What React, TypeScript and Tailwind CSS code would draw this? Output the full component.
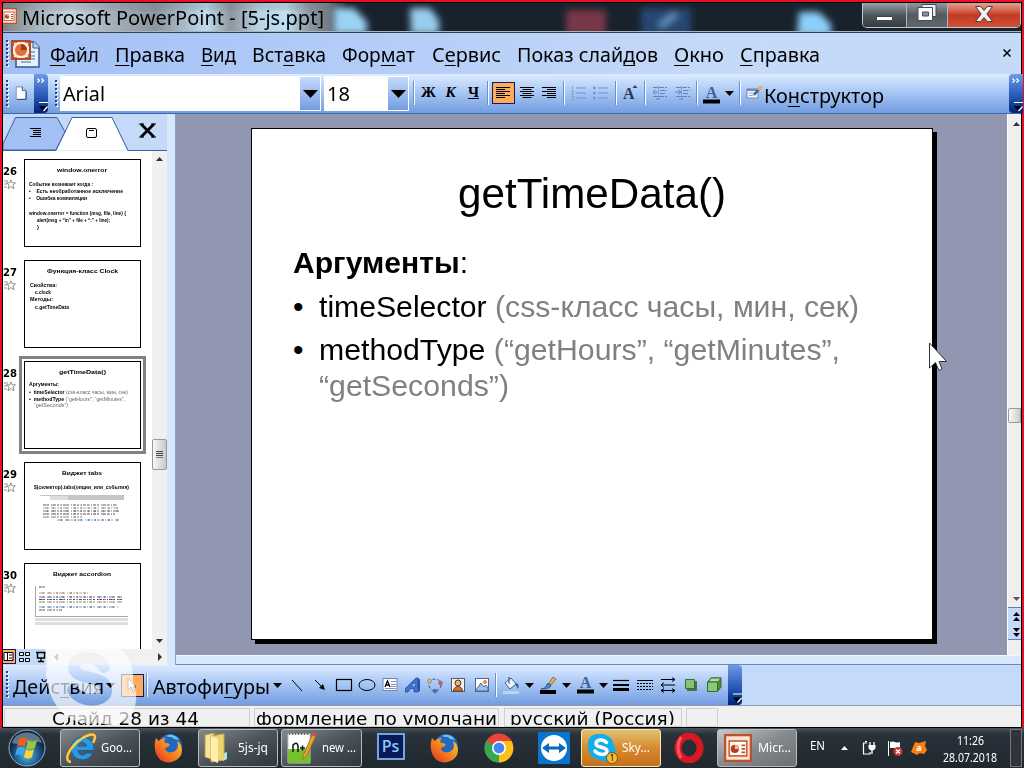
import React, { useLayoutEffect, useRef, useState } from 'react';

type Kids = { children?: React.ReactNode; className?: string };

/** Single line of text, stretched horizontally to the width of its box. */
function Fit({ className = '', children }: Kids) {
  const outer = useRef<HTMLSpanElement>(null);
  const inner = useRef<HTMLSpanElement>(null);
  const [scale, setScale] = useState(1);
  useLayoutEffect(() => {
    if (outer.current && inner.current && inner.current.offsetWidth) {
      setScale(outer.current.clientWidth / inner.current.getBoundingClientRect().width);
    }
  }, []);
  return (
    <span ref={outer} className={`block shrink-0 whitespace-nowrap ${className}`}>
      <span ref={inner} className="inline-block origin-left" style={{ transform: `scaleX(${scale})` }}>
        {children}
      </span>
    </span>
  );
}

const U = ({ children }: Kids) => (
  <span className="underline decoration-1 underline-offset-[3px]">{children}</span>
);

const Cell = ({ className = '', children }: Kids) => (
  <div className={`flex h-full shrink-0 items-center justify-center ${className}`}>{children}</div>
);

const Sep = ({ className = '' }: Kids) => (
  <Cell className={className}>
    <div className="h-6 w-px bg-[#6a8fd0]" />
    <div className="h-6 w-px bg-white" />
  </Cell>
);

const Down = ({ className = '' }: Kids) => (
  <svg className={`shrink-0 ${className}`} width="9" height="5" viewBox="0 0 9 5">
    <path d="M0 0H9L4.5 5Z" fill="#000" />
  </svg>
);

const Dots = ({ className = '' }: Kids) => (
  <svg className={`shrink-0 ${className}`} width="4" height="32" viewBox="0 0 4 32">
    {[2, 6, 10, 14, 18, 22, 26].map((y) => (
      <g key={y}>
        <rect x="1" y={y + 1} width="2" height="2" fill="#fff" />
        <rect x="0" y={y} width="2" height="2" fill="#27417c" />
      </g>
    ))}
  </svg>
);

function Overflow({ className = '', chevrons = true }: { className?: string; chevrons?: boolean }) {
  return (
    <svg className={`shrink-0 bg-linear-to-b from-[#6f9ae6] via-[#2f5fbd] to-[#00247c] ${className}`} width="14" height="39" viewBox="0 0 14 39">
      {chevrons && <path d="M3.500 4.500l2 2-2 2M7.500 4.500l2 2-2 2" stroke="#fff" strokeWidth="1.300" fill="none" />}
      <path d="M5 28.500h9" stroke="#fff" strokeWidth="1.200" />
      <path d="M5 32h8l-4 5Z" fill="#000" />
      <path d="M9.500 37l4-4.500" stroke="#fff" strokeWidth="1.200" />
    </svg>
  );
}

const PptIcon = ({ size }: { size: number }) => (
  <svg className="shrink-0" width={size} height={size} viewBox="0 0 16 16">
    <rect x=".6" y=".6" width="14.800" height="14.800" fill="#f8e4d8" stroke="#c0502c" strokeWidth="1.400" />
    <rect x="3" y="4" width="10" height="8.500" fill="#fff" stroke="#cb6640" strokeWidth="1" />
    <circle cx="6.200" cy="8.500" r="2.300" fill="#b23f1e" />
    <path d="M6.200 8.500V6.200A2.300 2.300 0 0 1 8.500 8.500Z" fill="#f6b48e" />
    <path d="M10 6.500h2M10 8.500h2M10 10.500h2" stroke="#c0502c" />
  </svg>
);

function TitleBar() {
  return (
    <div className="relative flex h-[30px] shrink-0 overflow-hidden border-b border-[#353f4b] bg-[#17222d]">
      <svg className="absolute inset-0" width="1018" height="29" viewBox="3 3 1018 29">
        <defs>
          <filter id="soft" x="-50%" y="-50%" width="200%" height="200%"><feGaussianBlur stdDeviation="3.500" /></filter>
          <linearGradient id="glass" x1="0" x2="1">
            <stop offset="0" stopColor="#7d8183" /><stop offset=".1" stopColor="#a9b6be" />
            <stop offset=".2" stopColor="#c3d2de" /><stop offset=".32" stopColor="#a3afb9" />
            <stop offset=".44" stopColor="#8b959d" /><stop offset=".52" stopColor="#a5b9c6" />
            <stop offset=".59" stopColor="#bfdcf0" /><stop offset=".66" stopColor="#8d979e" />
            <stop offset=".74" stopColor="#b9d3e2" /><stop offset=".82" stopColor="#bfe0f4" />
            <stop offset=".89" stopColor="#8a979f" /><stop offset=".94" stopColor="#737d84" /><stop offset="1" stopColor="#17222d" />
          </linearGradient>
        </defs>
        <rect x="3" y="3" width="345" height="29" fill="url(#glass)" />
        <rect x="3" y="3" width="320" height="5" fill="#5d666c" opacity=".4" filter="url(#soft)" />
        <g filter="url(#soft)">
          <path d="M334 8h20l13 14v12h-33z" fill="#9bd3f5" />
          <path d="M410 8h20l9 12v14h-28z" fill="#98cdee" />
          <rect x="566" y="10" width="40" height="25" fill="#793947" />
          <rect x="641" y="8" width="50" height="28" fill="#28466f" />
          <path d="M660 26l16-12" stroke="#6d9dcc" strokeWidth="5" />
          <path d="M799 12h20l12 12v12h-34z" fill="#8bd0fa" />
        </g>
        <path d="M3 31.500h1018" stroke="#a7b4c2" />
      </svg>
      <div className="relative mt-[5px] -ml-0.5 h-[18px] shrink-0"><PptIcon size={16} /></div>
      <Fit className="relative ml-[5px] w-[302px] font-['Noto_Sans',sans-serif] text-[19px] leading-[31px] text-black">Microsoft PowerPoint - [5-js.ppt]</Fit>
      <div className="relative ml-auto flex h-[25px] w-[159px] overflow-hidden rounded-b-[5px] border border-t-0 border-[#c2c8cd]">
        <div className="flex w-11 items-center justify-center border-r border-[#aeb5bb] bg-linear-to-b from-[#9aa2a8] via-[#4f575e] to-[#343c43]">
          <div className="mt-1.5 h-[5px] w-[17px] rounded-[1px] border border-[#444] bg-white" />
        </div>
        <div className="flex w-[41px] items-center justify-center border-r border-[#aeb5bb] bg-linear-to-b from-[#929a9f] via-[#535b60] to-[#5e686d]">
          <svg className="mb-1" width="20" height="20" viewBox="0 0 20 20">
            <path d="M5 1.500h14v12H5z" fill="#eee" stroke="#474c54" />
            <path d="M1 4.500h14.500v13H1z" fill="#fff" stroke="#474c54" />
            <path d="M5.500 9h6v4h-6z" fill="#8791a1" stroke="#474c54" />
          </svg>
        </div>
        <div className="flex flex-1 items-center justify-center bg-linear-to-b from-[#e3a092] via-[#c33a20] to-[#cf5236]">
          <svg className="mb-0.5" width="20" height="18" viewBox="0 0 20 18">
            <path d="M1.500 1.500h5L10 5.500l3.500-4h5L12.800 9l5.700 7.500h-5L10 12.500l-3.500 4h-5L7.200 9z" fill="#f5f5f5" stroke="#57363a" />
          </svg>
        </div>
      </div>
    </div>
  );
}

function MenuBar() {
  return (
    <div className="flex h-[41px] shrink-0 items-center bg-linear-to-r from-[#a2c0f6] to-[#c5d9f8] to-70% pt-1 font-['Noto_Sans',sans-serif] text-[19px] leading-[37px]">
      <Dots className="mb-1 ml-[3px]" />
      <svg className="mb-1 -ml-px shrink-0" width="32" height="30" viewBox="0 0 32 30">
        <path d="M7 3h18l5 5v20H7z" fill="#e8f0fd" stroke="#34588e" strokeWidth="1.500" />
        <path d="M24 2v7h7" fill="#bed2ee" stroke="#34588e" />
        <path d="M14 13h12M12 17h14M12 20h14M12 23h10" stroke="#7096d0" strokeWidth="1.300" />
        <path d="M3 2h18v18H3z" fill="#fbe7d8" stroke="#b14c27" strokeWidth="2" />
        <path d="M4 7V3h4M16 3h4v4M4 15v4h4M20 15v4h-4" fill="none" stroke="#b14c27" strokeWidth="1.500" />
        <circle cx="12" cy="11" r="6" fill="#e0703b" />
        <path d="M12 11V5a6 6 0 0 1 6 6Z" fill="#a63a16" />
      </svg>
      <Fit className="ml-[9px] w-[49px]"><U>Ф</U>айл</Fit>
      <Fit className="ml-4 w-[70px]"><U>П</U>равка</Fit>
      <Fit className="ml-4 w-[35px]"><U>В</U>ид</Fit>
      <Fit className="ml-4 w-[74px]">Вст<U>а</U>вка</Fit>
      <Fit className="ml-4 w-[73px]">Фор<U>м</U>ат</Fit>
      <Fit className="ml-[17px] w-[69px]">С<U>е</U>рвис</Fit>
      <Fit className="ml-4 w-[141px]">Показ слай<U>д</U>ов</Fit>
      <Fit className="ml-4 w-[50px]"><U>О</U>кно</Fit>
      <Fit className="ml-4 w-[80px]"><U>С</U>правка</Fit>
      <svg className="mr-2.5 mb-1.5 ml-auto" width="8" height="8" viewBox="0 0 8 8"><path d="M.5 .5l7 7M7.500 .5l-7 7" stroke="#000" strokeWidth="1.500" /></svg>
    </div>
  );
}

const Combo = ({ className = '', children }: Kids) => (
  <div className={`flex h-[35px] shrink-0 border border-white bg-white font-['Noto_Sans',sans-serif] text-[19px] leading-[34px] ${className}`}>
    {children}
    <div className="ml-auto flex w-5 items-center justify-center bg-linear-to-b from-[#c6dafa] to-[#739de0]">
      <svg width="15" height="8" viewBox="0 0 15 8"><path d="M0 0h15L7.500 8z" /></svg>
    </div>
  </div>
);

const AlignIcon = ({ x }: { x: number[] }) => (
  <svg width="14" height="12" viewBox="0 0 14 12">
    {[0, 2, 4, 6, 8, 10].map((y, i) => (
      <rect key={y} x={i % 2 ? x[0] : 0} y={y} width={i % 2 ? x[1] : 14} height="1" fill="#000" />
    ))}
  </svg>
);

const ListIcon = ({ numbered }: { numbered?: boolean }) => (
  <svg width="16" height="14" viewBox="0 0 16 14" stroke="#7895c7" strokeWidth="1.100">
    <path d="M5 2h10M5 7h10M5 12h10" />
    {numbered ? <path d="M1.500 0v4M.5 5.500h2v1.500l-2 1.500h2M.5 10.500h2v3h-2" fill="none" strokeWidth=".8" /> : <path d="M0 2h2.500M0 7h2.500M0 12h2.500" strokeWidth="2.400" />}
  </svg>
);

const IndentIcon = ({ flip }: { flip?: boolean }) => (
  <svg width="16" height="14" viewBox="0 0 16 14" stroke="#6483bd" fill="none">
    <path d="M1 1.500h14M8 4.500h7M8 7.500h5M1 10.500h14M4 13h4" strokeDasharray="5 1" />
    <path d={flip ? 'M0 6h5M3 3.500L6 6l-3 2.500' : 'M6 6H1M3.500 3.500L1 6l2.500 2.500'} />
    <path d="M6.500 0v14" strokeDasharray="1 1" />
  </svg>
);

const LetterA = () => (
  <svg className="overflow-visible" width="17" height="18" viewBox="0 0 17 18">
    <text x="8.500" y="12" textAnchor="middle" fontFamily="Liberation Serif" fontSize="16" fontWeight="bold" fill="#3d639f">A</text>
    <rect x="0" y="13.500" width="17" height="4" fill="#000" />
  </svg>
);

function FormatBar() {
  return (
    <div className="flex h-10 shrink-0 items-start border-b border-[#3c68ac] bg-linear-to-b from-[#deebff] via-[#a9c8f5] via-45% to-[#739ce0]">
      <Dots className="mt-1 ml-[3px]" />
      <svg className="mt-[12px] ml-[5px] shrink-0" width="12" height="14" viewBox="0 0 13 16">
        <path d="M1 1h7l4 4v10H1z" fill="#fff" stroke="#6c87b6" /><path d="M8 1v4h4" fill="#cad9f0" stroke="#29406d" /><path d="M2 15.500h10.500V6" fill="none" stroke="#29406d" />
      </svg>
      <Overflow className="ml-[7px] rounded-r" />
      <Dots className="mt-1 ml-[7px]" />
      <Combo className="mt-0.5 ml-px w-[261px]"><Fit className="ml-0.5 w-[42px]">Arial</Fit></Combo>
      <Combo className="mt-0.5 ml-[3px] w-[85px]"><Fit className="ml-0.5 w-[23px]">18</Fit></Combo>
      <div className="ml-px flex h-[37px] font-['Liberation_Serif',serif] text-[15px] font-bold">
        <Sep className="w-2" />
        <Cell className="w-[21px]">Ж</Cell>
        <Cell className="w-[23px] italic">К</Cell>
        <Cell className="w-[23px] underline">Ч</Cell>
        <Sep className="w-1.5" />
        <Cell className="w-6"><div className="flex h-[22px] w-[23px] items-center justify-center border border-[#0d1a6b] bg-[#ffab57]"><AlignIcon x={[0, 9]} /></div></Cell>
        <Cell className="w-[23px]"><AlignIcon x={[2.5, 9]} /></Cell>
        <Cell className="w-[22px]"><AlignIcon x={[5, 9]} /></Cell>
        <Sep className="w-[7px]" />
        <Cell className="w-[23px]"><ListIcon numbered /></Cell>
        <Cell className="w-[22px]"><ListIcon /></Cell>
        <Sep className="w-[7px]" />
        <Cell className="w-[23px]">
          <svg className="overflow-visible" width="16" height="16" viewBox="0 0 16 16"><text x="0" y="14" fontFamily="Liberation Serif" fontSize="16" fontWeight="bold" fill="#29364f">A</text><path d="M9.500 3h5L12 0z" fill="#26458d" /></svg>
        </Cell>
        <Sep className="w-1.5" />
        <Cell className="w-[23px]"><IndentIcon /></Cell>
        <Cell className="w-[23px]"><IndentIcon flip /></Cell>
        <Sep className="w-1.5" />
        <Cell className="w-[22px] pt-1"><LetterA /></Cell>
        <Cell className="w-3.5 pt-0.5"><Down /></Cell>
        <Sep className="w-[7px]" />
        <Cell className="w-[22px]">
          <svg width="17" height="14" viewBox="0 0 17 14">
            <rect x="1" y="3" width="11" height="9" fill="#f6f9ff" stroke="#7085ad" /><path d="M1 3h11v2H1z" fill="#6a8bc9" /><path d="M3 7h6M3 9.500h4" stroke="#8ba5d5" />
            <path d="M8 9l6-7" stroke="#3f5c99" strokeWidth="2.500" /><path d="M12 4l3.500-4" stroke="#e8b24a" strokeWidth="3" />
          </svg>
        </Cell>
      </div>
      <Fit className="-ml-px w-[120px] font-['Noto_Sans',sans-serif] text-[19px] leading-[44px]">Ко<U>н</U>структор</Fit>
      <Overflow className="-mr-0.5 ml-auto rounded-l" />
    </div>
  );
}

function Thumb({ n, selected, cut, children }: { n: number; selected?: boolean; cut?: boolean; children: React.ReactNode }) {
  return (
    <div className={`flex shrink-0 ${cut ? 'h-[87px]' : 'h-[101px]'}`}>
      <div className="w-[21px] shrink-0 pt-1.5">
        <Fit className="w-3.5 font-['DejaVu_Sans',sans-serif] text-[11px] leading-[13px] font-bold">{n}</Fit>
        <svg className="mt-px ml-px" width="12" height="11" viewBox="0 0 12 11" stroke="#777" strokeWidth=".8" fill="none">
          <path d="M7 .8l1.200 3h3.300L9 6l1 3.800-3-2.200-3 2.200L5 6 2.500 3.800h3.300zM0 2h4M0 5h3M0 8h3" />
        </svg>
      </div>
      <div className={`h-[88px] w-[117px] shrink-0 border border-black bg-white font-['Liberation_Sans',sans-serif] text-[6px] leading-[7px] font-bold ${selected ? 'outline-3 outline-offset-2 outline-[#828282]' : ''}`}>{children}</div>
    </div>
  );
}

const codeColors = ['#354a9c', '#c79158', '#59708c', '#313b73', '#a5743e', '#6897a8'];
function CodeLines({ rows, className = '' }: { rows: [number, number, number][]; className?: string }) {
  return (
    <svg className={`block ${className}`} width="90" height="26" viewBox="0 0 90 26">
      {rows.map(([x, y, w], i) => (
        <g key={y} strokeWidth="1.200" opacity=".9">
          <path d={`M${x} ${y}h${w}`} stroke={codeColors[i % 6]} strokeDasharray="3 1 2 2 1 1" />
          <path d={`M${x + 3} ${y}h${w - 3}`} stroke={codeColors[(i + 1) % 6]} strokeDasharray="2 4 2 6" />
        </g>
      ))}
    </svg>
  );
}

function SidePane() {
  return (
    <div className="flex w-[164px] shrink-0 flex-col bg-white">
      <svg className="shrink-0 bg-[#c5d9f8]" width="164" height="37" viewBox="0 0 164 37">
        <path d="M0 36V30L12.500 3.500H54L62 18 53 36Z" fill="#a3c0f5" stroke="#3b5f9f" />
        <path d="M53 37L69 3.500h40l15 33h-71Z" fill="#fff" />
        <path d="M0 36.500h53L69 3.500h40l16 33h39" fill="none" stroke="#3b5f9f" />
        <path d="M27 14.500h11M30 16.500h8M30 18.500h8M30 20.500h8M27 22.500h11" stroke="#000" />
        <rect x="83.500" y="14.500" width="10" height="9" rx="1.500" fill="#fff" stroke="#000" /><path d="M86 16.500h5" stroke="#000" />
        <path d="M138 10l13 13M151 10l-13 13" stroke="#000" strokeWidth="2.800" /><path d="M136 10h5M148 10h5M136 23h5M148 23h5" stroke="#000" />
      </svg>
      <div className="flex h-[498px] shrink-0">
        <div className="flex w-[149px] flex-col overflow-hidden pt-2">
          <Thumb n={26}>
            <Fit className="mt-[7px] ml-8 w-[50px]">window.onerror</Fit>
            <Fit className="mt-[7px] ml-1 w-[64px]">Событие возникает когда :</Fit>
            <Fit className="ml-1 w-[94px]">•&nbsp;&nbsp;&nbsp;&nbsp;Есть необработанное исключение</Fit>
            <Fit className="ml-1 w-[58px]">•&nbsp;&nbsp;&nbsp;&nbsp;Ошибка компиляции</Fit>
            <Fit className="mt-2 ml-1 w-[97px]">window.onerror = function (msg, file, line) {'{'}</Fit>
            <Fit className="ml-3 w-[73px]">alert(msg + “\n” + file + “:” + line);</Fit>
            <Fit className="ml-3 w-0.5">{'}'}</Fit>
          </Thumb>
          <Thumb n={27}>
            <Fit className="mt-[7px] ml-[22px] w-[71px]">Функция-класс Clock</Fit>
            <Fit className="mt-[7px] ml-[5px] w-[27px]">Свойства:</Fit>
            <Fit className="ml-2.5 w-4">c.clock</Fit>
            <Fit className="ml-[5px] w-[23px]">Методы:</Fit>
            <Fit className="mt-px ml-2.5 w-[34px]">c.getTimeData</Fit>
          </Thumb>
          <Thumb n={28} selected>
            <Fit className="mt-[7px] ml-[34px] w-[47px]">getTimeData()</Fit>
            <Fit className="mt-[5px] ml-1 w-[30px]">Аргументы:</Fit>
            <Fit className="mt-px ml-1 w-[99px]">•&nbsp; timeSelector <span className="font-normal text-[#666]">(css-класс часы, мин, сек)</span></Fit>
            <Fit className="ml-1 w-[96px]">•&nbsp; methodType <span className="font-normal text-[#666]">(“getHours”, “getMinutes”,</span></Fit>
            <Fit className="-mt-px ml-[9px] w-[34px] font-normal text-[#666]">“getSeconds”)</Fit>
          </Thumb>
          <Thumb n={29}>
            <Fit className="mt-[7px] ml-[37px] w-10">Виджет tabs</Fit>
            <Fit className="mt-[7px] ml-[9px] w-[95px]">$(селектор).tabs(опции_или_события)</Fit>
            <div className="mt-1 ml-[15px] flex h-[5px] w-[84px] border-t border-[#c6c6c6] bg-[#c6c6c6]"><div className="w-2.5 bg-white" /><div className="w-[18px] bg-[#ddd]" /></div>
            <CodeLines className="ml-2.5" rows={[[8, 5, 74], [8, 8, 75], [8, 11, 76], [8, 14, 72], [8, 17, 40], [22, 20, 62]]} />
          </Thumb>
          <Thumb n={30} cut>
            <Fit className="mt-[7px] ml-7 w-[58px]">Виджет accordion</Fit>
            <div className="mt-2 ml-2.5 h-[31px] w-[93px] border-b border-l border-[#aaa]">
              <CodeLines rows={[[3, 1, 7], [3, 7, 50], [3, 11, 83], [3, 13.5, 84], [3, 16, 84], [3, 21, 79], [3, 24, 23]]} />
            </div>
            <div className="mt-px ml-2.5 h-[3px] w-[93px] bg-[#dedede]" /><div className="mt-px ml-2.5 h-[3px] w-[93px] bg-[#dedede]" />
          </Thumb>
        </div>
        <div className="flex w-[15px] flex-col items-center justify-between bg-[#f0f0f0] py-1.5">
          <svg width="7" height="4" viewBox="0 0 7 4"><path d="M0 4h7L3.500 0z" fill="#333" /></svg>
          <div className="mt-[109px] flex h-[31px] w-[15px] flex-col items-center justify-center gap-px rounded-[2px] border border-[#999] bg-linear-to-r from-[#f8f8f8] to-[#c9c9c9]">
            <div className="h-px w-[7px] bg-[#444]" /><div className="h-px w-[7px] bg-[#444]" /><div className="h-px w-[7px] bg-[#444]" /><div className="h-px w-[7px] bg-[#777]" />
          </div>
          <svg width="7" height="4" viewBox="0 0 7 4"><path d="M0 0h7L3.500 4z" fill="#333" /></svg>
        </div>
      </div>
      <svg className="shrink-0" width="164" height="16" viewBox="0 0 164 16">
        <rect width="164" height="16" fill="#c5d9f8" /><rect x="43" width="121" height="16" fill="#f1f1f1" />
        <rect x="-.5" y=".5" width="13" height="14" fill="#ffb05b" stroke="#0d1a6b" />
        <path d="M1 3.500h9v8H1zM4.500 3v9M6 6h3M6 9h3" fill="#fff" stroke="#000" />
        <path d="M16.500 3.500h4v3h-4zM22.500 3.500h4v3h-4zM16.500 9.500h4v3h-4zM22.500 9.500h4v3h-4z" fill="#e7f0ff" stroke="#000" />
        <path d="M33 3.500h10M34.500 4v5h7V4M38 9v3M35 12.500h6" fill="none" stroke="#000" strokeWidth="1.400" />
        <path d="M55 4v8l-4-4z" fill="#777" /><path d="M155 4v8l4-4z" fill="#333" />
      </svg>
    </div>
  );
}

function SlideView() {
  return (
    <div className="flex min-w-0 flex-1 flex-col">
      <div className="flex h-[541px] shrink-0 bg-[#9297b1]">
        <div className="mt-3.5 ml-[75px] h-[512px] w-[682px] shrink-0 border border-black bg-white font-['Liberation_Sans',Arial,sans-serif] text-black shadow-[4px_4px_0_0_#000]">
          <Fit className="mt-[41px] ml-[206px] w-[268px] text-[42px] leading-[48px]">getTimeData()</Fit>
          <div className="flex text-[30px] leading-9">
            <Fit className="mt-[27px] ml-[41px] w-[175px]"><b>Аргументы</b>:</Fit>
          </div>
          <div className="mt-2 flex text-[30px] leading-9">
            <span className="ml-[41px] w-[26px]">•</span>
            <Fit className="w-[540px]">timeSelector <span className="text-[#808080]">(css-класс часы, мин, сек)</span></Fit>
          </div>
          <div className="mt-[7px] flex text-[30px] leading-9">
            <span className="ml-[41px] w-[26px]">•</span>
            <div>
              <Fit className="w-[521px]">methodType <span className="text-[#808080]">(“getHours”, “getMinutes”,</span></Fit>
              <Fit className="w-[190px] text-[#808080]">“getSeconds”)</Fit>
            </div>
          </div>
        </div>
        <div className="ml-auto flex w-[14px] shrink-0 flex-col items-center border-l border-white bg-[#efefef]">
          <svg className="mt-2 ml-1" width="7" height="4" viewBox="0 0 7 4"><path d="M0 4h7L3.500 0z" fill="#333" /></svg>
          <div className="mt-[282px] h-[15px] w-[13px] rounded-l-[2px] border border-[#999] bg-linear-to-r from-[#fafafa] to-[#ccc]" />
          <svg className="mt-[174px] ml-1" width="7" height="4" viewBox="0 0 7 4"><path d="M0 0h7L3.500 4z" fill="#555" /></svg>
          <svg className="mt-1.5" width="13" height="33" viewBox="0 0 13 33">
            <rect width="13" height="33" fill="#c5d9f8" /><path d="M0 .5h13M0 32.500h13" stroke="#5c7fc0" />
            <path d="M5 9l3.500-4L12 9zM5 14l3.500-4 3.500 4zM5 21h7l-3.500 4zM5 26h7l-3.500 4z" />
          </svg>
        </div>
      </div>
      <div className="h-2.5 shrink-0 border-t border-b border-t-[#f4f7fd] border-b-[#6489c8] bg-[#d9e7fb]" />
    </div>
  );
}

const Ic = ({ children, w = 20 }: { children: React.ReactNode; w?: number }) => (
  <svg width={w} height="20" viewBox="0 0 20 20" fill="none" stroke="#000">{children}</svg>
);

function DrawBar() {
  return (
    <div className="flex h-[41px] shrink-0 border-b border-[#8e9bb2] bg-[#c5d9f8] font-['Noto_Sans',sans-serif] text-[19px] leading-[44px]">
      <div className="flex h-10 w-[739px] shrink-0 rounded-r bg-linear-to-b from-[#deebff] via-[#a9c8f5] via-45% to-[#739ce0]">
        <Dots className="mt-1 ml-[3px]" />
        <Fit className="ml-[3px] w-[91px]">Дейс<U>т</U>вия</Fit>
        <Cell className="w-[13px]"><Down /></Cell>
        <Cell className="ml-0.5 w-[26px]">
          <div className="flex size-[23px] items-center justify-center border border-[#0d1a6b] bg-[#ffab57]">
            <svg width="10" height="16" viewBox="0 0 10 16"><path d="M1 1v12l3-3 2 5 2-1-2-4h3z" fill="#fff" stroke="#555" /></svg>
          </div>
        </Cell>
        <Sep className="w-[3px]" />
        <Fit className="ml-[5px] w-[117px]">Автофи<U>г</U>уры</Fit>
        <Cell className="w-[15px]"><Down /></Cell>
        <Cell className="w-[23px]"><Ic><path d="M5 5l10 11" /></Ic></Cell>
        <Cell className="w-6"><Ic><path d="M5 5l8 8" /><path d="M15 15l-6-2 4-4z" fill="#000" stroke="none" /></Ic></Cell>
        <Cell className="w-[23px]"><Ic><rect x="2.500" y="4.500" width="15" height="11" strokeWidth="1.200" /></Ic></Cell>
        <Cell className="w-[23px]"><Ic><ellipse cx="10" cy="10" rx="8" ry="5.500" /></Ic></Cell>
        <Cell className="w-[23px]"><Ic><rect x="3" y="3.500" width="14" height="12" fill="#fff" stroke="#7187ae" /><path d="M5 12l2.500-6L10 12M6 10h3" strokeWidth="1.300" /><path d="M11 6.500h5M11 9.500h5M11 11.500h5M5 13.500h11" stroke="#8292b5" /></Ic></Cell>
        <Cell className="w-[23px]"><Ic><path d="M2.500 13.500L13 3h2v14h-4v-3.500H7.500L5 17H2.500z" fill="#3d75d5" stroke="#214b9c" strokeWidth=".8" /><path d="M8.500 11.500L12 7v4.500z" fill="#c4d9fa" stroke="#214b9c" strokeWidth=".6" /><path d="M15 3l2 1.500v11.500l-2 1z" fill="#2754ac" stroke="none" /></Ic></Cell>
        <Cell className="w-[22px]"><Ic><circle cx="10" cy="10" r="6" stroke="#294e91" strokeDasharray="3 2" /><circle cx="4.500" cy="6" r="2" fill="#e4c23f" stroke="#666" strokeWidth=".5" /><circle cx="15.500" cy="8" r="2" fill="#e25f34" stroke="#666" strokeWidth=".5" /><circle cx="10" cy="16" r="2" fill="#546ac7" stroke="#666" strokeWidth=".5" /></Ic></Cell>
        <Cell className="w-6"><Ic><rect x="3.500" y="3.500" width="13" height="13" fill="#f8f3e8" stroke="#52596d" /><circle cx="10" cy="8" r="3" fill="#e6b27c" stroke="#513820" /><path d="M5.500 16c0-6 9-6 9 0z" fill="#d17331" stroke="#66421f" /></Ic></Cell>
        <Cell className="w-[23px]"><Ic><rect x="3.500" y="3.500" width="13" height="13" fill="#fff" stroke="#52658d" /><path d="M4 15l5-7 3 4 2-2 2 3v3H4z" fill="#9ec1e5" stroke="#4a689b" /><circle cx="13" cy="7" r="2" fill="#e78a3d" stroke="none" /></Ic></Cell>
        <Sep className="w-1.5" />
        <Cell className="w-[23px]"><Ic><path d="M4 8l6-5 5 6-6 5z" fill="#eff5ff" stroke="#3f5f94" /><path d="M8 2v7" stroke="#345" /><path d="M15 8c3 1 3 3 2 6l-3-5z" fill="#3360ad" stroke="none" /><path d="M2 16h16v3H2z" fill="#b4d8eb" stroke="none" /></Ic></Cell>
        <Cell className="w-3.5"><Down /></Cell>
        <Cell className="w-6"><Ic><path d="M3 14c4 0 5-3 7-6l3 3c-3 3-6 3-10 3z" fill="#5087d4" stroke="#34558e" /><path d="M11 8l4-6 3 2-5 6z" fill="#edae45" stroke="#725228" strokeWidth=".7" /><path d="M2 15h16v4H2z" fill="#000" stroke="none" /></Ic></Cell>
        <Cell className="w-[13px]"><Down /></Cell>
        <Cell className="w-6"><LetterA /></Cell>
        <Cell className="w-3"><Down /></Cell>
        <Cell className="w-6"><Ic><path d="M2 5.500h16" strokeWidth="1.200" /><path d="M2 10h16" strokeWidth="2" /><path d="M2 14.500h16" strokeWidth="3" /></Ic></Cell>
        <Cell className="w-[23px]"><Ic><path d="M2 5.500h16" /><path d="M2 8.500h16M2 11.500h16M2 14.500h16" strokeDasharray="2 1" /></Ic></Cell>
        <Cell className="w-[23px]"><Ic><path d="M3 4.500h14l-3-2M17 4.500l-3 2M17 10H3l3-2.500M3 10l3 2.500M3 15.500h14l-3-2M17 15.500l-3 2M3 15.500l3-2M3 15.500l3 2" /></Ic></Cell>
        <Cell className="w-[23px]"><Ic><path d="M6 6h10v10H6z" fill="#536b52" stroke="none" /><path d="M4.500 4.500h9v9h-9z" fill="#84c274" stroke="#397031" /></Ic></Cell>
        <Cell className="w-[23px]"><Ic><path d="M4 7l3-4h10v9l-3 4z" fill="#4d8c3d" stroke="#336b28" /><path d="M4 7l3-4h10l-3 4z" fill="#b4df9f" stroke="#336b28" /><path d="M3.500 7h10v9.500h-10z" fill="#8ac97b" stroke="#336b28" /></Ic></Cell>
        <Overflow chevrons={false} className="ml-auto h-10! rounded-r" />
      </div>
    </div>
  );
}

const Panel = ({ className = '', children }: Kids) => (
  <div className={`mt-0.5 h-[19px] shrink-0 overflow-hidden border border-[#cfcfcf] ${className}`}>{children}</div>
);

const StatusBar = () => (
  <div className="flex h-[22px] shrink-0 border-b border-black bg-[#f0f0f0] font-['DejaVu_Sans',sans-serif] text-[18.500px] leading-5">
    <Panel className="ml-px w-[246px]"><div className="h-4 overflow-hidden"><Fit className="ml-[47px] w-[147px]">Слайд 28 из 44</Fit></div></Panel>
    <Panel className="ml-1 w-[245px]"><div className="h-4 overflow-hidden"><Fit className="ml-px w-[241px]">формление по умолчани</Fit></div></Panel>
    <Panel className="ml-[5px] w-[178px]"><div className="h-4 overflow-hidden"><Fit className="ml-[5px] w-[165px]">русский (Россия)</Fit></div></Panel>
    <Panel className="ml-1 w-[32px]" />
  </div>
);

const Firefox = () => (
  <svg width="30" height="32" viewBox="0 0 30 32">
    <defs><linearGradient id="fox" x1="1" y1="0" x2="0" y2="1"><stop stopColor="#ffd43a" /><stop offset=".5" stopColor="#f5821f" /><stop offset="1" stopColor="#df2f22" /></linearGradient></defs>
    <circle cx="16" cy="14" r="12" fill="#2467bd" />
    <path d="M12 4c5-3 11 0 13 4-4-1-6-1-7-3-2 0-4 0-6-1z" fill="#64c4f2" />
    <path d="M2 6l3 3c2-2 4-3 7-3-2 2-2 3-1 5 3 0 6 1 4 3l-4 2c0 4 6 6 10 3 4-3 3-7 2-10 5 3 6 9 4 14-5 9-18 10-23 2C0 20 0 11 2 6z" fill="url(#fox)" />
  </svg>
);

function Task({ className = '', label, labelClass = '', children }: Kids & { label: string; labelClass?: string }) {
  return (
    <div className={`my-px flex h-[38px] shrink-0 items-center rounded-[3px] border border-[#b6bcc0] font-['Noto_Sans',sans-serif] text-[12px] text-white ${className}`}>
      {children}
      <Fit className={labelClass}>{label}</Fit>
    </div>
  );
}

function TaskBar() {
  return (
    <div className="flex h-10 shrink-0 items-center bg-linear-to-b from-[#4b535a] via-[#29323a] via-15% to-[#20282f] pl-[3px]">
      <Cell className="w-[57px] pr-2.5">
        <svg width="38" height="38" viewBox="0 0 38 38">
          <defs><radialGradient id="orb" cx=".5" cy=".7"><stop stopColor="#50bde8" /><stop offset=".65" stopColor="#1d5a90" /><stop offset="1" stopColor="#112c45" /></radialGradient></defs>
          <circle cx="19" cy="19" r="18" fill="url(#orb)" stroke="#8eb0c4" />
          <path d="M4 14C8 0 30 0 34 14 25 10 12 17 4 14z" fill="#fff" opacity=".35" />
          <path d="M11 10c3-2 5-2 8 0l-2 8c-3-2-5-2-8 0z" fill="#ee5e23" /><path d="M20 11c3 2 5 2 9 0l-2 8c-4 2-6 2-9 0z" fill="#91c83e" />
          <path d="M9 19c3-2 5-2 8 0l-2 8c-3-2-5-2-8 0z" fill="#43a5e8" /><path d="M18 20c3 2 5 2 8 0l-2 8c-3 2-5 2-8 0z" fill="#ffd23d" />
        </svg>
      </Cell>
      <Task className="w-20 bg-linear-to-br from-[#84898d] via-[#4d5459] to-[#30373c] pl-1" label="Goo..." labelClass="ml-1 w-[31px]">
        <svg width="32" height="32" viewBox="0 0 32 32">
          <path d="M17 5a11.500 11.500 0 1 0 11 16h-7c-2 3.500-8 2-8-2.500h16C30 10 24 5 17 5zM13 14c.5-4.500 8-4.500 8.500 0z" fill="#2c98dd" stroke="#145b98" fillRule="evenodd" />
          <path d="M6 30C-1 29 2 20 12 10 20 3 30 0 30 5c0 2-1 4-2 6" fill="none" stroke="#ffc93a" strokeWidth="2.500" />
        </svg>
      </Task>
      <Cell className="w-[58px]"><Firefox /></Cell>
      <Task className="w-20 bg-linear-to-br from-[#84898d] via-[#4d5459] to-[#30373c] pl-1" label="5js-jq" labelClass="ml-1.5 w-[30px]">
        <svg width="29" height="32" viewBox="0 0 29 32"><path d="M2 3l9-2v27l-9-3z" fill="#f7e599" stroke="#bb9c3e" /><path d="M8 4l13-2v26l-13 2z" fill="#ecd370" stroke="#c6aa50" /><path d="M8 4l7 3v24l-7-3z" fill="#fff0ad" /><path d="M21 21l3-1v7l-4 2z" fill="#b9e1e4" /></svg>
      </Task>
      <Task className="ml-[3px] w-[81px] bg-linear-to-br from-[#84898d] via-[#4d5459] to-[#30373c] pl-1" label="new ..." labelClass="ml-[5px] w-[34px]">
        <svg width="31" height="34" viewBox="0 0 31 34"><path d="M2 3h22v29H2z" fill="#fff" stroke="#bfcbb3" /><path d="M2 18h22v14H2z" fill="#77c22c" /><path d="M3 3h20" stroke="#666" strokeDasharray="1 2" strokeWidth="2" /><path d="M7 21v-7q4-4 5 1v6M14 17h5M16.500 14.500v5M20 17h4" fill="none" stroke="#111" strokeWidth="1.500" /><path d="M17 25l9-21 3.500 1.500-9 20-4 3z" fill="#e4a332" stroke="#916326" strokeWidth=".7" /><path d="M26 4l1-3 4 2-1 3z" fill="#d6504b" /></svg>
      </Task>
      <Cell className="w-[56px] pb-1 pl-px"><div className="flex h-[27px] w-7 items-center justify-center border-2 border-[#75a5dc] bg-[#081a58] font-['Open_Sans',sans-serif] text-[16px] font-semibold text-[#8bc6fb]">Ps</div></Cell>
      <Cell className="w-[54px]"><Firefox /></Cell>
      <Cell className="w-[54px]">
        <svg width="30" height="30" viewBox="0 0 30 30"><circle cx="15" cy="15" r="14.500" fill="#eb4335" /><path d="M15 15L2.500 7.700A14.500 14.500 0 0 0 15 29.500L21 18z" fill="#34a853" /><path d="M15 15L15 29.500A14.500 14.500 0 0 0 27.500 8H15z" fill="#fbc116" /><circle cx="15" cy="15" r="7" fill="#fff" /><circle cx="15" cy="15" r="5.400" fill="#4386f4" /></svg>
      </Cell>
      <Cell className="w-[55px]">
        <svg width="32" height="32" viewBox="0 0 32 32"><rect width="32" height="32" rx="1" fill="#0c74cf" /><circle cx="16" cy="16" r="13" fill="#fff" /><path d="M4 16l7-5v3.500h10V11l7 5-7 5v-3.500H11V21z" fill="#0c66bc" /></svg>
      </Cell>
      <Task className="w-20 border-[#ffe6ac] bg-linear-to-b from-[#dec36d] via-[#d8892f] to-[#c6701c] pl-1" label="Sky..." labelClass="ml-1 w-[28px]">
        <svg width="32" height="32" viewBox="0 0 32 32">
          <circle cx="11" cy="11" r="9" fill="#10aeea" /><circle cx="20" cy="20" r="10" fill="#10aeea" /><circle cx="15" cy="15" r="13" fill="#10aeea" />
          <path d="M20.500 10.500C17 6.500 10 7.500 10 12c0 4 11 2.500 11 7s-8.500 4.500-12 0" fill="none" stroke="#fff" strokeWidth="3.500" strokeLinecap="round" />
          <circle cx="26" cy="26" r="5.500" fill="#f8bd34" stroke="#785b1c" /><text x="26" y="29" fontSize="8" fontFamily="Noto Sans" textAnchor="middle">1</text>
        </svg>
      </Task>
      <Cell className="w-14"><svg width="30" height="30" viewBox="0 0 30 30"><ellipse cx="15" cy="15" rx="11" ry="12" fill="none" stroke="#d81722" strokeWidth="7" /><path d="M7 4q-6 10 0 21" stroke="#fb555b" strokeWidth="3" fill="none" /></svg></Cell>
      <Task className="w-20 bg-linear-to-br from-[#c5c8ca] via-[#85898c] to-[#6c7072] pl-1.5" label="Micr..." labelClass="ml-1.5 w-[33px]"><PptIcon size={28} /></Task>
      <div className="flex flex-1 items-center font-['Noto_Sans',sans-serif] text-[12px] text-white">
        <Fit className="mb-1 ml-[13px] w-[15px]">EN</Fit>
        <svg className="ml-4" width="7" height="4" viewBox="0 0 7 4"><path d="M0 4h7L3.500 0z" fill="#fff" /></svg>
        <svg className="ml-3.5" width="15" height="16" viewBox="0 0 15 16"><path d="M5 3H1.500v11H8v-2M3 1.500h2" fill="none" stroke="#fff" strokeWidth="1.200" /><path d="M6.500 5h7v3q-1 2.500-3.500 2.500T6.500 8z" fill="#fff" /><path d="M8 2v3M12 2v3M10 10v4" stroke="#fff" strokeWidth="1.300" /></svg>
        <svg className="ml-2.5" width="16" height="17" viewBox="0 0 16 17"><path d="M1.500 1v15" stroke="#fff" /><path d="M3 2q3-1 5 0t5 0v6H3z" fill="#fff" /><circle cx="11" cy="11.500" r="4.500" fill="#d92e28" /><path d="M9 9.500l4 4M13 9.500l-4 4" stroke="#fff" strokeWidth="1.500" /></svg>
        <svg className="ml-2" width="16" height="16" viewBox="0 0 16 16"><path d="M4 2l4 1 7-2-1 5 2 4-3 4-4-1-3 2-4-2-2-1 2-5z" fill="#ff7e12" /><text x="8" y="10.500" fontFamily="Noto Sans" fontSize="9" fontWeight="bold" textAnchor="middle" fill="#fff">a</text></svg>
        <div className="mt-0.5 ml-4 flex flex-col items-center leading-[17px]"><Fit className="w-[27px]">11:26</Fit><Fit className="w-[54px]">28.07.2018</Fit></div>
        <div className="mr-0.5 ml-auto h-[38px] w-3 border border-[#77797c] bg-[#30343a]" />
      </div>
    </div>
  );
}

export default function App() {
  return (
    <div className="relative flex h-[768px] w-[1024px] flex-col overflow-hidden bg-[#20282f] text-black">
      <div className="flex h-[728px] shrink-0 flex-col border-t-2 border-r-2 border-l-2 border-[#e81123] bg-black pt-px pr-px pl-px">
        <TitleBar />
        <MenuBar />
        <FormatBar />
        <div className="flex h-[551px] shrink-0">
          <SidePane />
          <div className="w-[9px] shrink-0 border-r border-[#86a0d0] bg-[#d9e7fb]" />
          <SlideView />
        </div>
        <DrawBar />
        <StatusBar />
      </div>
      <TaskBar />
      <svg className="absolute top-[342px] left-[928px]" width="22" height="32" viewBox="0 0 22 32"><path d="M1.500 1v25l6-5.500 3.500 8 3-1.500-3-7.500h7.500z" fill="#fff" stroke="#30343c" /></svg>
      <svg className="absolute top-[648px] left-[44px]" width="94" height="80" viewBox="44 648 94 80">
        <defs>
          <mask id="cut"><rect x="40" y="640" width="104" height="90" fill="#fff" /><path d="M104 667C97 654 74 656 74 667C74 681 106 674 106 690C106 703 80 703 73 690" fill="none" stroke="#000" strokeWidth="12" strokeLinecap="round" /></mask>
        </defs>
        <path d="M45 648H119C129 656 134 667 133 681C138 694 137 706 131 714C123 726 110 727 100 723C78 727 57 716 49 690C45 680 45 668 49 661C46 657 45 652 45 648z" fill="#fff" opacity=".66" mask="url(#cut)" />
      </svg>
    </div>
  );
}
